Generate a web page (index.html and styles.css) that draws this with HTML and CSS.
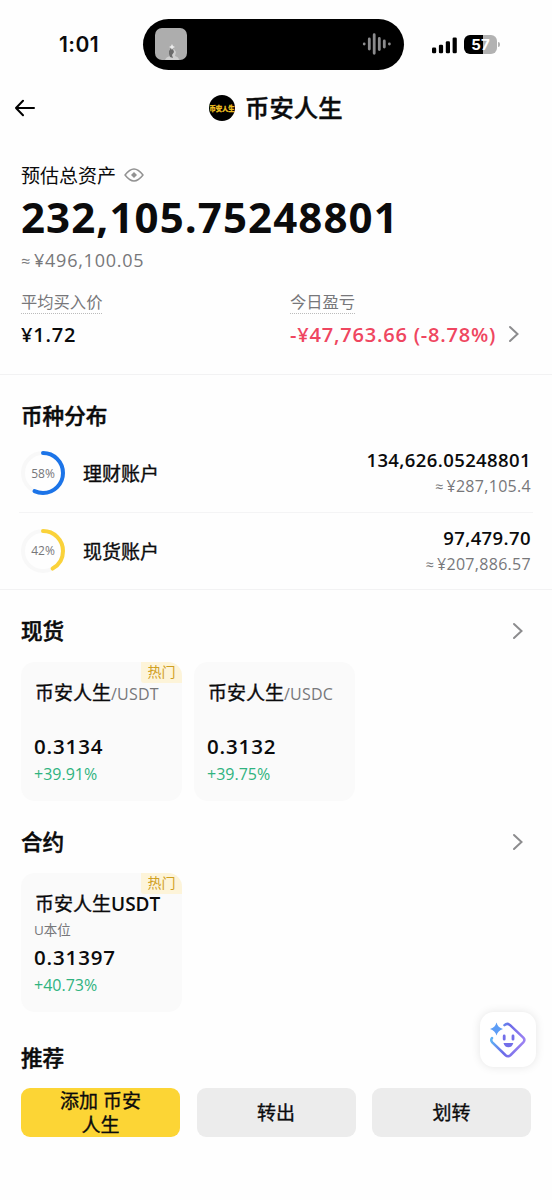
FILE: index.html
```html
<!DOCTYPE html>
<html lang="zh-CN">
  <head>
    <meta charset="UTF-8" />
    <meta name="viewport" content="width=device-width, initial-scale=1.0" />
    <title>币安人生</title>
    <link rel="stylesheet" href="styles.css">
  </head>
  <body>
    <div class="status-bar">
      <div class="time">1:01</div>
      <div class="island">
        <svg class="cover" width="32" height="32" viewBox="0 0 32 32">
          <rect width="32" height="32" rx="7" fill="#adadad" />
          <path d="M10 32q1-3 5-4l-1-3 1-4h4l2 3-1 4q4 1 4 4z" fill="#cfcfcf" />
          <path d="M14 23l2-3 2 1 1 3-2 3 1 3-3-1-1-3z" fill="#6a6a6a" />
          <path d="M16 18l1-2 1 2 2 1-2 1-1 2-1-2-2-1z" fill="#ececec" />
        </svg>
        <svg width="30" height="24" viewBox="0 0 30 24" stroke="#8b8b8d" stroke-width="2.8" stroke-linecap="round">
          <path d="M2.2 12v.01M7.3 7v10M12.2 2.7v18.6M17.3 6.5v11M22.3 9v6M27.4 12v.01" />
        </svg>
      </div>
      <div class="status-icons">
        <svg width="26" height="18" viewBox="0 0 26 18">
          <rect x="0" y="11.6" width="4.2" height="5.6" rx="1.3" />
          <rect x="6.9" y="8.8" width="4.2" height="8.4" rx="1.3" />
          <rect x="13.8" y="5.2" width="4.2" height="12" rx="1.3" />
          <rect x="20.6" y="1.5" width="4.2" height="15.7" rx="1.3" />
        </svg>
        <div class="battery">57</div>
        <i class="battery-tip"></i>
      </div>
    </div>

    <header class="header">
      <svg class="back" width="22" height="18" viewBox="0 0 22 18" fill="none" stroke="#000" stroke-width="2" stroke-linecap="round" stroke-linejoin="round">
        <path d="M19 9H1M8 1.700L1 9L8 16.300" />
      </svg>
      <div class="coin-logo"><span>币安人生</span></div>
      <h1>币安人生</h1>
    </header>

    <section class="overview">
      <div class="total-label">
        预估总资产
        <svg width="20" height="14" viewBox="0 0 20 14" fill="none" stroke="#929292" stroke-width="1.5">
          <path d="M1 7C4.5 2.6 7 1 10 1s5.500 1.600 9 6c-3.500 4.400-6 6-9 6S4.500 11.400 1 7z" stroke-linejoin="round" />
          <path d="M10 4L13 7L10 10L7 7z" fill="#929292" stroke="none" />
        </svg>
      </div>
      <div class="total">232,105.75248801</div>
      <div class="total-fiat"><i>≈</i>¥496,100.05</div>
      <div class="stats">
        <div class="stat">
          <span class="stat-label">平均买入价</span>
          <div class="stat-value">¥1.72</div>
        </div>
        <div class="stat">
          <span class="stat-label">今日盈亏</span>
          <div class="stat-value down">
            <span>-¥47,763.66 (-8.78%)</span>
            <svg class="chevron" width="12" height="18" viewBox="0 0 12 18"><path d="M2 2l7.500 7L2 16" /></svg>
          </div>
        </div>
      </div>
    </section>

    <section class="accounts">
      <h2>币种分布</h2>
      <div class="account">
        <div class="ring">
          <svg width="44" height="44" viewBox="0 0 44 44">
            <circle cx="22" cy="22" r="20" />
            <circle class="blue" cx="22" cy="22" r="20" pathLength="100" stroke-dasharray="57 43" />
          </svg>
          <span>58%</span>
        </div>
        <div class="account-name">理财账户</div>
        <div class="account-value">
          <div class="amount">134,626.05248801</div>
          <div class="fiat"><i>≈</i>¥287,105.4</div>
        </div>
      </div>
      <div class="account">
        <div class="ring">
          <svg width="44" height="44" viewBox="0 0 44 44">
            <circle cx="22" cy="22" r="20" />
            <circle class="yellow" cx="22" cy="22" r="20" pathLength="100" stroke-dasharray="42 58" />
          </svg>
          <span>42%</span>
        </div>
        <div class="account-name">现货账户</div>
        <div class="account-value">
          <div class="amount">97,479.70</div>
          <div class="fiat"><i>≈</i>¥207,886.57</div>
        </div>
      </div>
    </section>

    <section class="market">
      <div class="market-title">
        <h2>现货</h2>
        <svg class="chevron" width="12" height="18" viewBox="0 0 12 18"><path d="M2 2l7.500 7L2 16" /></svg>
      </div>
      <div class="cards">
        <div class="card">
          <span class="hot">热门</span>
          <div class="pair">币安人生<small>/USDT</small></div>
          <div class="sub"></div>
          <div class="price">0.3134</div>
          <div class="change">+39.91%</div>
        </div>
        <div class="card">
          <div class="pair">币安人生<small>/USDC</small></div>
          <div class="sub"></div>
          <div class="price">0.3132</div>
          <div class="change">+39.75%</div>
        </div>
      </div>
    </section>

    <section class="market">
      <div class="market-title">
        <h2>合约</h2>
        <svg class="chevron" width="12" height="18" viewBox="0 0 12 18"><path d="M2 2l7.500 7L2 16" /></svg>
      </div>
      <div class="cards">
        <div class="card">
          <span class="hot">热门</span>
          <div class="pair">币安人生<b>USDT</b></div>
          <div class="sub">U本位</div>
          <div class="price">0.31397</div>
          <div class="change">+40.73%</div>
        </div>
      </div>
    </section>

    <section class="recommend">
      <h2>推荐</h2>
      <div class="actions">
        <button class="primary">添加 币安<br>人生</button>
        <button>转出</button>
        <button>划转</button>
      </div>
    </section>

    <div class="assistant">
      <svg width="38" height="38" viewBox="0 0 38 38" fill="none">
        <defs>
          <linearGradient id="ai" x1="2" y1="16" x2="36" y2="24" gradientUnits="userSpaceOnUse">
            <stop offset="0" stop-color="#5cb6f5" />
            <stop offset=".45" stop-color="#6b6ae8" />
            <stop offset="1" stop-color="#a184f3" />
          </linearGradient>
        </defs>
        <path d="M15.500 4.200q2.800-2.600 5.600 0L34.300 16.600q2.200 2.400 0 4.800L21.700 34q-2.700 2.500-5.400 0L3.300 21.400q-2-2.200-.300-4.400" stroke="url(#ai)" stroke-width="2.500" stroke-linecap="round" />
        <path d="M7.500 1.500q1.300 5 6.500 6.500q-5.200 1.500-6.500 6.600q-1.300-5.100-6.500-6.600q5.200-1.500 6.500-6.500z" fill="#5d9df6" />
        <path d="M15.200 15v3.200M24 15v3.200" stroke="#726ee9" stroke-width="2.800" stroke-linecap="round" />
        <path d="M14.500 22h9.800q-1 4.200-4.900 4.200T14.500 22z" fill="#726ee9" />
      </svg>
    </div>
  </body>
</html>
```

FILE: styles.css
```css
* {
  box-sizing: border-box;
}

body {
  margin: 0;
  height: 1200px;
  background: #fefefe;
  color: #0b0b0c;
  font-family: "Open Sans", "Noto Sans CJK SC", sans-serif;
  overflow: hidden;
}

h1,
h2 {
  margin: 0;
  font-weight: 500;
}

h2 {
  height: 30px;
  line-height: 30px;
  font-size: 21.6px;
  -webkit-text-stroke: 0.5px #0b0b0c;
}

i {
  font-style: normal;
}

/* status bar */
.status-bar {
  height: 88px;
  display: flex;
  padding: 19px 52px 0 59px;
}

.time {
  width: 84px;
  height: 50px;
  line-height: 52px;
  font-family: "Inter", sans-serif;
  font-size: 21px;
  font-weight: 600;
  letter-spacing: 0.4px;
}

.island {
  width: 260.5px;
  flex: none;
  height: 50.5px;
  border-radius: 26px;
  background: #000;
  display: flex;
  align-items: center;
  justify-content: space-between;
  padding: 0 12px;
}

.status-icons {
  flex: 1;
  height: 51px;
  display: flex;
  align-items: center;
  padding-left: 28.5px;
}

.status-icons svg {
  flex: none;
}

.battery {
  width: 33px;
  height: 19px;
  flex: none;
  margin-left: 6px;
  border-radius: 6px;
  background: linear-gradient(90deg, #000 57%, #b2b2b2 57%);
  color: #fff;
  font: 700 15px/19px "Inter", sans-serif;
  text-align: center;
}

.battery-tip {
  width: 2px;
  height: 5px;
  flex: none;
  margin-left: 1px;
  border-radius: 0 3px 3px 0;
  background: #b2b2b2;
}

/* header */
.header {
  height: 40px;
  padding: 0 15px;
  display: flex;
  align-items: center;
}

.coin-logo {
  width: 26px;
  height: 26px;
  margin-left: 172px;
  border-radius: 50%;
  background: #000;
  color: #f4c323;
  display: flex;
  align-items: center;
  justify-content: center;
}

.coin-logo span {
  font-size: 6.3px;
  font-weight: 700;
  white-space: nowrap;
  -webkit-text-stroke: 0.3px #f4c323;
}

h1 {
  margin-left: 10px;
  font-size: 24.4px;
  line-height: 40px;
  -webkit-text-stroke: 0.4px #0b0b0c;
}

/* overview */
.overview {
  height: 247px;
  padding: 32px 21px 0;
  border-bottom: 1px solid #f2f2f3;
}

.total-label {
  height: 29px;
  display: flex;
  align-items: center;
  gap: 8px;
  font-size: 19px;
}

.total {
  height: 56px;
  line-height: 56px;
  font-size: 42px;
  font-weight: 700;
  letter-spacing: 1.1px;
}

.total-fiat {
  height: 30px;
  line-height: 30px;
  font-size: 18px;
  letter-spacing: 0.75px;
  color: #77777a;
}

.total-fiat i,
.fiat i {
  font-size: 0.9em;
  margin-right: 3px;
}

.stats {
  display: flex;
  margin-top: 16px;
}

.stat {
  width: 269px;
  flex: none;
}

.stat-label {
  display: inline-block;
  height: 23px;
  line-height: 22px;
  font-size: 16.3px;
  color: #77777a;
  border-bottom: 1px dotted #bbb;
}

.stat-value {
  height: 30px;
  margin-top: 5px;
  display: flex;
  align-items: center;
  font-size: 20px;
  font-weight: 600;
  letter-spacing: 0.8px;
  white-space: nowrap;
}

.down {
  color: #ef4660;
}

.chevron {
  flex: none;
  fill: none;
  stroke: #8c8c8e;
  stroke-width: 2;
  stroke-linecap: round;
}

.down .chevron {
  margin-left: 12px;
}

/* accounts */
.accounts {
  height: 215px;
  padding: 26px 19px 0;
  border-bottom: 1px solid #f2f2f3;
}

.accounts h2 {
  padding-left: 2px;
  margin-bottom: 4px;
}

.account {
  height: 77px;
  display: flex;
  align-items: center;
  padding: 0 2px 1px;
}

.account + .account {
  border-top: 1px solid #f4f4f5;
}

.ring {
  width: 44px;
  height: 44px;
  display: grid;
  place-items: center;
}

.ring svg,
.ring span {
  grid-area: 1 / 1;
}

.ring svg {
  transform: rotate(-90deg);
}

.ring circle {
  fill: none;
  stroke: #f8f8f8;
  stroke-width: 4;
}

.ring circle.blue {
  stroke: #1c74e8;
  stroke-linecap: round;
}

.ring circle.yellow {
  stroke: #fad23a;
  stroke-linecap: round;
}

.ring span {
  font-size: 12px;
  color: #77777a;
}

.account-name {
  margin-left: 18px;
  font-size: 19px;
  -webkit-text-stroke: 0.35px #0b0b0c;
}

.account-value {
  margin-left: auto;
  text-align: right;
}

.amount {
  height: 26px;
  line-height: 26px;
  font-size: 18.5px;
  font-weight: 600;
  letter-spacing: 0.4px;
}

.fiat {
  height: 26px;
  line-height: 26px;
  font-size: 16px;
  letter-spacing: 0.3px;
  color: #77777a;
}

/* spot / futures */
.market {
  padding: 26px 21px 0;
}

.market-title {
  display: flex;
  align-items: center;
  justify-content: space-between;
  padding-right: 7px;
}

.cards {
  display: flex;
  gap: 12px;
  margin-top: 16px;
}

.card {
  position: relative;
  width: 161px;
  height: 139px;
  padding: 17px 13px 0;
  border-radius: 14px;
  background: #fafafa;
  overflow: hidden;
}

.hot {
  position: absolute;
  top: 0;
  right: 0;
  width: 41px;
  height: 21px;
  line-height: 20px;
  text-align: center;
  font-size: 14px;
  color: #d0a01f;
  background: #fdf4d9;
  border-bottom-left-radius: 3px;
}

.pair {
  height: 28px;
  line-height: 28px;
  padding-left: 1px;
  font-size: 19px;
  white-space: nowrap;
  -webkit-text-stroke: 0.35px #0b0b0c;
}

.pair small {
  font-size: 16px;
  letter-spacing: 0.2px;
  color: #77777a;
  -webkit-text-stroke: 0;
}

.pair b {
  font-weight: 600;
  -webkit-text-stroke: 0;
}

.sub {
  height: 25px;
  line-height: 25px;
  font-size: 13.5px;
  color: #77777a;
}

.price {
  height: 29px;
  line-height: 29px;
  font-size: 20.5px;
  font-weight: 600;
  letter-spacing: 0.85px;
}

.change {
  height: 26px;
  line-height: 26px;
  font-size: 16px;
  color: #2fb380;
}

/* bottom actions */
.recommend {
  padding: 31px 21px 0;
}

.actions {
  display: grid;
  grid-template-columns: repeat(3, 1fr);
  gap: 16.5px;
  margin-top: 15px;
}

.actions button {
  height: 49px;
  padding: 0;
  border: none;
  border-radius: 9px;
  background: #ececec;
  color: #0b0b0c;
  font-family: inherit;
  font-size: 19px;
  line-height: 24px;
  -webkit-text-stroke: 0.35px #0b0b0c;
}

.actions .primary {
  background: #fcd535;
}

/* floating helper */
.assistant {
  position: absolute;
  left: 480px;
  top: 1012px;
  width: 56px;
  height: 55px;
  border-radius: 14px;
  background: #fff;
  box-shadow: 0 0 10px rgba(0, 0, 0, 0.1);
  display: flex;
  align-items: center;
  justify-content: center;
}
```
